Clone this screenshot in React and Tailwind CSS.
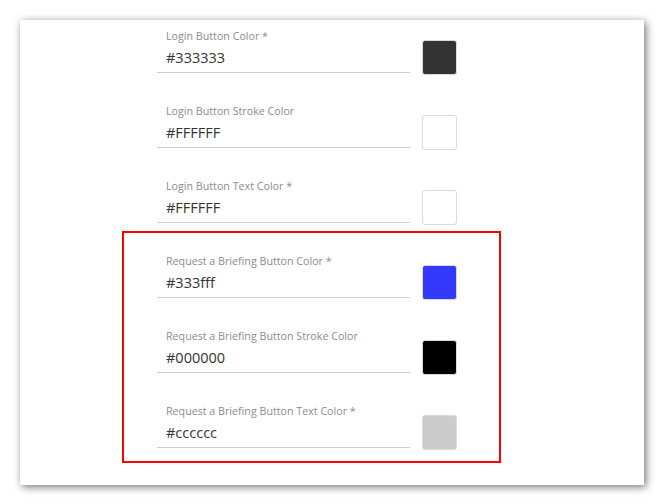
const loginFields = [
  { label: 'Login Button Color *', value: '#333333', swatch: 'bg-[#333333]' },
  { label: 'Login Button Stroke Color', value: '#FFFFFF', swatch: 'bg-white' },
  { label: 'Login Button Text Color *', value: '#FFFFFF', swatch: 'bg-white' },
];

const briefingFields = [
  { label: 'Request a Briefing Button Color *', value: '#333fff', swatch: 'bg-[#3339ff]' },
  { label: 'Request a Briefing Button Stroke Color', value: '#000000', swatch: 'bg-black' },
  { label: 'Request a Briefing Button Text Color *', value: '#cccccc', swatch: 'bg-[#cccccc]' },
];

function ColorRow({ label, value, swatch }) {
  return (
    <div className="flex items-start">
      <div className="w-[253px] border-b border-[#cfcfcf]">
        <div className="pl-[9px] text-[10.7px] leading-[14px] text-[#8c8c8c]">{label}</div>
        <div className="mt-[4px] pl-[9px] pb-[3px] text-[14.5px] leading-[22px] text-[#333333]">{value}</div>
      </div>
      <div className={`ml-[12px] mt-[11px] h-[35px] w-[35px] rounded-[3px] border border-[#d9d9d9] ${swatch}`} />
    </div>
  );
}

export default function App() {
  return (
    <div className="min-h-screen bg-white p-[20px] pb-[19px] font-['Open_Sans',sans-serif]">
      <div className="h-[465px] w-[624px] bg-white pl-[102px] pt-[9px] shadow-[2px_2px_8px_rgba(0,0,0,0.55)]">
        <div className="flex flex-col gap-[29px] pl-[35px]">
          {loginFields.map((f) => (
            <ColorRow key={f.label} {...f} />
          ))}
        </div>
        <div className="mt-[6px] w-[379px] border-2 border-[#ff0000] pl-[33px] pt-[21px] pb-[11px]">
          <div className="flex flex-col gap-[29px]">
            {briefingFields.map((f) => (
              <ColorRow key={f.label} {...f} />
            ))}
          </div>
        </div>
      </div>
    </div>
  );
}
